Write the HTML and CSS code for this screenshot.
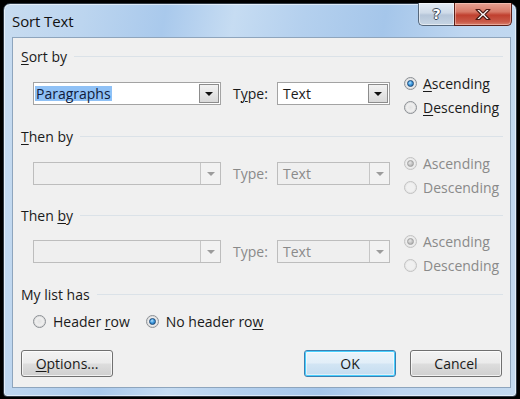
FILE: index.html
```html
<!DOCTYPE html>
<html>
<head>
<meta charset="utf-8">
<link rel="stylesheet" href="styles.css">
</head>
<body>
<div class="window">
  <div class="titlebar">
    <span class="title">Sort Text</span>
    <div class="caption-btns">
      <div class="cbtn help"><span class="q">?</span></div>
      <div class="cbtn close">
        <svg width="18" height="13" viewBox="0 0 18 13">
          <path d="M2 1.5 L5.5 1.5 L9 5 L12.5 1.5 L16 1.5 L11 6.5 L16 11.5 L12.5 11.5 L9 8 L5.5 11.5 L2 11.5 L7 6.5 Z" fill="#fff" stroke="#4a1a14" stroke-width="1.1" stroke-linejoin="round"/>
        </svg>
      </div>
    </div>
  </div>
  <div class="client">
    <div class="group-h g1"><span><u>S</u>ort by</span><i class="rule"></i></div>
    <div class="sort-row r1">
      <div class="combo key"><span class="val"><span class="hl">Paragraphs</span></span><span class="drop"><i class="tri"></i></span></div>
      <span class="lbl">T<u>y</u>pe:</span>
      <div class="combo type"><span class="val">Text</span><span class="drop"><i class="tri"></i></span></div>
      <div class="radios">
        <label class="radio"><i class="dot on"></i><span><u>A</u>scending</span></label>
        <label class="radio"><i class="dot"></i><span><u>D</u>escending</span></label>
      </div>
    </div>

    <div class="group-h g2"><span><u>T</u>hen by</span><i class="rule"></i></div>
    <div class="sort-row r2 disabled">
      <div class="combo key"><span class="val"></span><span class="drop"><i class="tri"></i></span></div>
      <span class="lbl">Type:</span>
      <div class="combo type"><span class="val">Text</span><span class="drop"><i class="tri"></i></span></div>
      <div class="radios">
        <label class="radio"><i class="dot on"></i><span>Ascending</span></label>
        <label class="radio"><i class="dot"></i><span>Descending</span></label>
      </div>
    </div>

    <div class="group-h g3"><span>Then <u>b</u>y</span><i class="rule"></i></div>
    <div class="sort-row r3 disabled">
      <div class="combo key"><span class="val"></span><span class="drop"><i class="tri"></i></span></div>
      <span class="lbl">Type:</span>
      <div class="combo type"><span class="val">Text</span><span class="drop"><i class="tri"></i></span></div>
      <div class="radios">
        <label class="radio"><i class="dot on"></i><span>Ascending</span></label>
        <label class="radio"><i class="dot"></i><span>Descending</span></label>
      </div>
    </div>

    <div class="group-h g4"><span>My list has</span><i class="rule"></i></div>
    <div class="list-row">
      <label class="radio"><i class="dot"></i><span>Header <u>r</u>ow</span></label>
      <label class="radio"><i class="dot on"></i><span>No header ro<u>w</u></span></label>
    </div>

    <div class="btn-row">
      <div class="btn"><u>O</u>ptions...</div>
      <div class="spacer"></div>
      <div class="btn default">OK</div>
      <div class="btn">Cancel</div>
    </div>
  </div>
</div>
</body>
</html>
```
FILE: styles.css
```css
* { box-sizing: border-box; }
html, body { margin: 0; padding: 0; }
body {
  width: 520px;
  height: 399px;
  background: #000;
  overflow: hidden;
  font-family: "Open Sans", "Noto Sans", sans-serif;
  font-size: 14px;
  color: #1a1a1a;
}
u { text-decoration: underline; text-underline-offset: 2px; text-decoration-thickness: 1px; }

.window {
  margin: 3px 0 0 3px;
  width: 514px;
  height: 394px;
  border: 1px solid #2f3a46;
  border-radius: 7px 7px 4px 4px;
  background:
    linear-gradient(100deg, #c8dcf0 0%, #bcd5ef 14%, #a9c9ec 28%, #c6dcf2 40%, #b4d0ee 52%, #a5c6ea 66%, #bed6f0 80%, #c3d9ef 100%);
  box-shadow: inset 0 0 0 1px rgba(255,255,255,0.55);
  display: flex;
  flex-direction: column;
}

.titlebar {
  height: 33px;
  display: flex;
  align-items: flex-start;
  padding-left: 8px;
}
.title {
  font-size: 15px;
  color: #111;
  margin-top: 7px;
  letter-spacing: -0.1px;
}
.caption-btns {
  margin-left: auto;
  margin-right: 4px;
  margin-top: -1px;
  display: flex;
}
.cbtn {
  height: 23px;
  display: flex;
  align-items: center;
  justify-content: center;
  border: 1px solid #56687c;
  border-top: none;
}
.help {
  width: 36px;
  border-radius: 0 0 0 5px;
  border-right: none;
  background: linear-gradient(#e4ecf5 0%, #cfdbe8 45%, #b6c6d9 55%, #c7d5e4 100%);
  box-shadow: inset 0 0 0 1px rgba(255,255,255,0.5);
}
.help .q {
  font-family: "DejaVu Sans", sans-serif;
  font-weight: bold;
  font-size: 14px;
  color: #fff;
  line-height: 1;
  text-shadow: 1px 0 0 #3d4a5a, -1px 0 0 #3d4a5a, 0 1px 0 #3d4a5a, 0 -1px 0 #3d4a5a;
}
.close {
  width: 58px;
  border-color: #5a1f18;
  border-radius: 0 0 5px 0;
  background: linear-gradient(#e6a293 0%, #d77a68 40%, #c0402f 55%, #c95a48 85%, #d9806d 100%);
  box-shadow: inset 0 0 0 1px rgba(255,220,210,0.45);
}

.client {
  margin: 0 5px 8px 8px;
  flex: 1;
  background: #f0f0f0;
  border: 1px solid #8ea5bd;
  display: flex;
  flex-direction: column;
  padding: 0 7px 0 8px;
}

.group-h {
  height: 18px;
  display: flex;
  align-items: center;
  gap: 7px;
  white-space: nowrap;
}
.group-h .rule {
  flex: 1;
  height: 1px;
  background: #dbe2e8;
  margin-top: 1px;
}
.g1 { margin-top: 9px; }
.g2 { margin-top: 10px; }
.g3 { margin-top: 9px; }
.g4 { margin-top: 10px; }

.sort-row {
  height: 48px;
  display: flex;
  align-items: center;
  padding-left: 12px;
}
.r1, .r2 { margin-top: 4px; }
.r3 { margin-top: 3px; }

.combo {
  height: 23px;
  display: flex;
  border: 1px solid #a3a3a3;
  background: #fff;
}
.combo.key { width: 188px; }
.combo.type { width: 113px; }
.combo .val {
  flex: 1;
  display: flex;
  align-items: center;
  padding-left: 1px;
  overflow: hidden;
}
.combo.type .val { padding-left: 5px; }
.hl {
  background: #8fc1f6;
  color: #101a3a;
  padding: 0 1px;
  line-height: 15px;
}
.combo .drop {
  width: 20px;
  margin: 1px;
  border: 1px solid #8c8c8c;
  background: linear-gradient(#f3f3f3, #d9d9d9);
  display: flex;
  align-items: center;
  justify-content: center;
}
.tri {
  width: 0;
  height: 0;
  border-left: 4px solid transparent;
  border-right: 4px solid transparent;
  border-top: 4px solid #111;
  margin-top: 1px;
}

.lbl {
  margin-left: 12px;
  width: 44px;
}

.radios {
  margin-left: 14px;
  padding-top: 4px;
  display: flex;
  flex-direction: column;
}
.radios .radio { height: 24px; }

.radio {
  display: flex;
  align-items: center;
  gap: 6px;
  white-space: nowrap;
}
.dot {
  width: 13px;
  height: 13px;
  border-radius: 50%;
  border: 1px solid #8b8f94;
  background: radial-gradient(circle at 50% 50%, #e3e3e3 0%, #eeeeee 45%, #f8f8f8 100%);
  box-shadow: inset 0 0 0 1px #dcdcdc;
  display: flex;
  align-items: center;
  justify-content: center;
  flex: none;
}
.dot.on::after {
  content: "";
  width: 7px;
  height: 7px;
  border-radius: 50%;
  background: radial-gradient(circle at 40% 35%, #b6e3ff 0%, #3f9be0 45%, #1a5d9c 100%);
  border: 1px solid #1c4a79;
  box-sizing: border-box;
}

.disabled { color: #8a8a8a; }
.disabled .combo {
  border-color: #bdbdbd;
  background: #efefef;
}
.disabled .combo .drop {
  border: none;
  border-left: 1px solid #c6c6c6;
  margin: 0;
  background: #f2f2f2;
}
.disabled .tri { border-top-color: #9c9c9c; }
.disabled .dot {
  border-color: #c2c2c2;
  background: #f0f0f0;
  box-shadow: inset 0 0 0 1px #e6e6e6;
}
.disabled .dot.on::after {
  background: radial-gradient(circle at 40% 35%, #e8e8e8 0%, #b5b5b5 70%, #a0a0a0 100%);
  border-color: #a0a0a0;
}

.list-row {
  margin-top: 8px;
  height: 20px;
  display: flex;
  align-items: center;
  padding-left: 12px;
  gap: 16px;
}
.list-row .radio { gap: 7px; }

.btn-row {
  margin-top: 19px;
  display: flex;
  gap: 14px;
  padding-right: 1px;
}
.spacer { flex: 1; }
.btn {
  width: 92px;
  height: 27px;
  border: 1px solid #707070;
  border-radius: 3px;
  background: linear-gradient(#f3f3f3 0%, #ebebeb 48%, #dddddd 52%, #cfcfcf 100%);
  box-shadow: inset 0 0 0 1px rgba(255,255,255,0.7);
  display: flex;
  align-items: center;
  justify-content: center;
  color: #1a1a1a;
}
.btn.default {
  border-color: #3c7fb1;
  box-shadow: inset 0 0 0 1px #48d0ff, inset 0 0 0 2px rgba(255,255,255,0.5);
  background: linear-gradient(#eaf4fb 0%, #e2eef8 48%, #d2e5f4 52%, #c4dcef 100%);
}
```
